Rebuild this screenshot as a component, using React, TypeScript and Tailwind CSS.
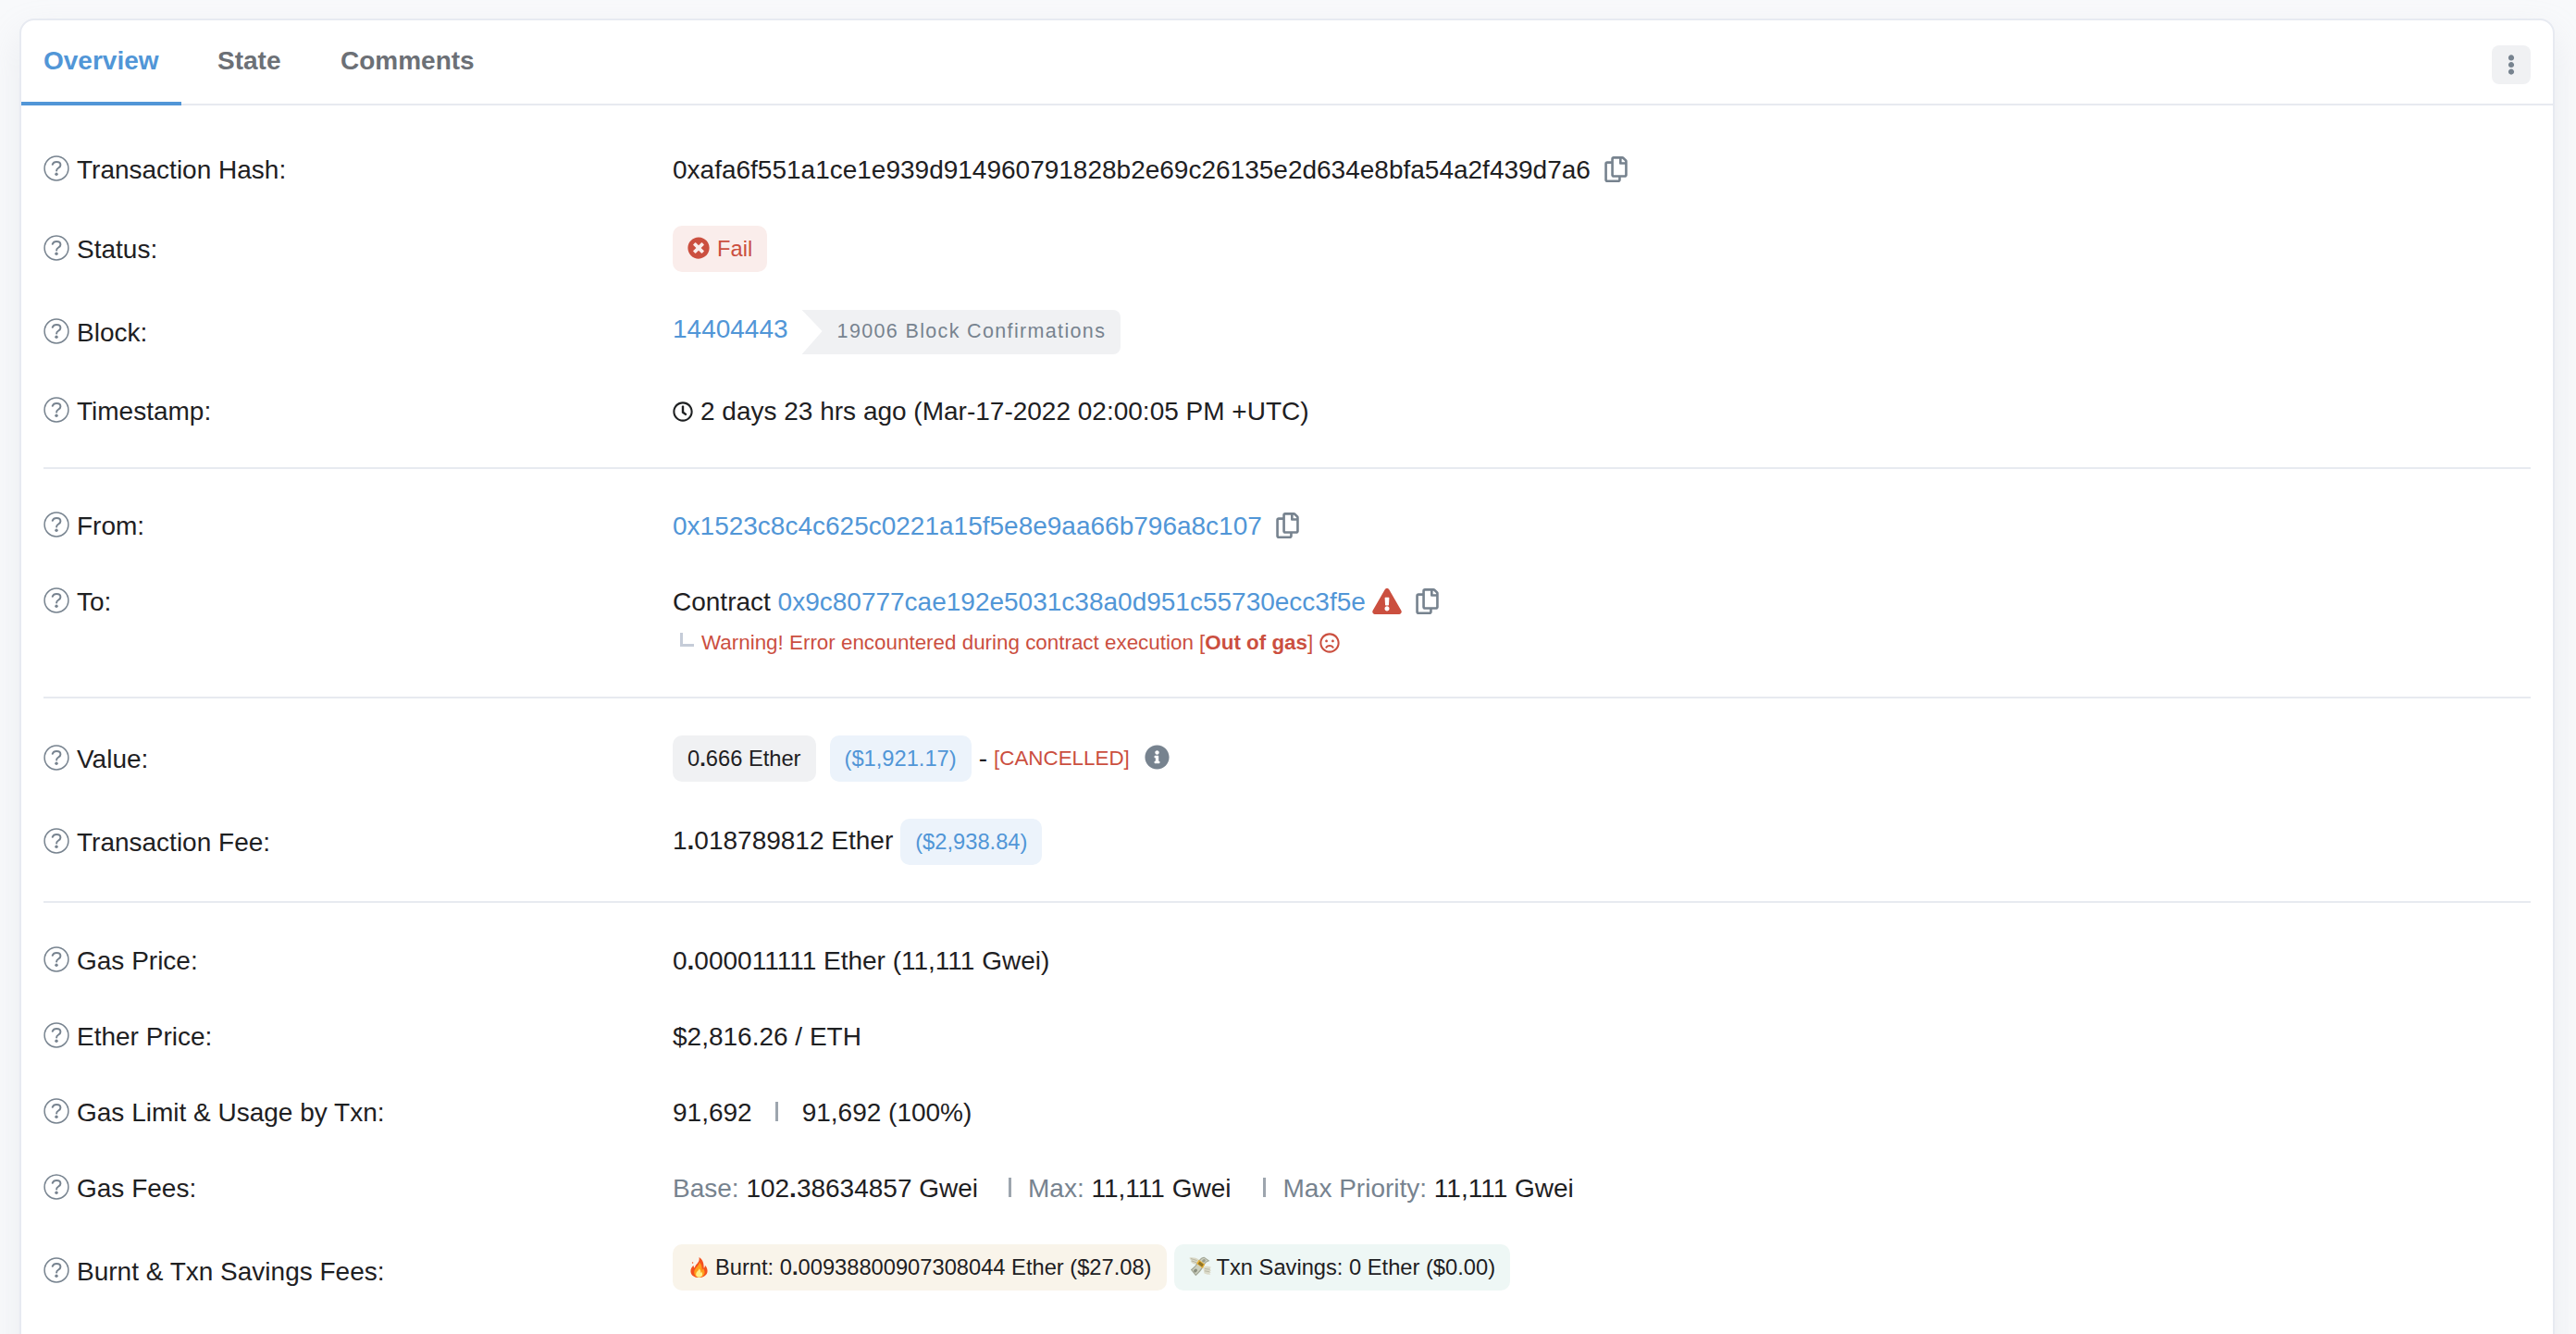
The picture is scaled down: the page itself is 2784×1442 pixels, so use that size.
import type { ReactNode } from "react";
import {
  FaEllipsisV,
  FaExclamationTriangle,
  FaInfoCircle,
  FaRegClock,
  FaRegCopy,
  FaRegFrown,
  FaTimesCircle,
} from "react-icons/fa";

function HelpIcon() {
  return (
    <svg viewBox="0 0 28 28" className="-mt-0.5 size-7 shrink-0 text-[#77838f]" fill="none" stroke="currentColor">
      <circle cx="14" cy="14" r="12.9" strokeWidth="1.5" />
      <path d="M9.700 9.800C10.400 8 12 7 14.100 7c2.600 0 4.300 1.400 4.300 3.400 0 3.100-4.300 3-4.300 6" strokeWidth="2" strokeLinecap="round" />
      <circle cx="14" cy="20.300" r="1.700" fill="currentColor" stroke="none" />
    </svg>
  );
}

function Flame() {
  return (
    <svg viewBox="0 0 20 24" className="ml-[3px] h-6 w-[19px] shrink-0">
      <path d="M10 .5c.6 3-.3 5-2 7C6 9.600 5.200 10.800 5.200 12.600 4.200 12 3.700 11 3.700 9.600 1.400 11.600.3 14 .5 17 .8 21 4.500 23.700 10 23.700s9.300-3 9.500-7.200c.2-3-1-5.200-2.700-7 0 1.500-.4 2.500-1.300 3.200C15.500 8 14.500 3 10 .5z" fill="#f4511e" />
      <path d="M10.300 6c.3 3.500-4.600 6.300-5.700 10.200C3.800 20 6 23.300 10 23.300s6.800-2.800 6.300-6.600c-.2-1.500-.8-2.700-1.700-3.700-.2 1-.6 1.600-1.300 2C13.500 11.500 12.600 8.200 10.300 6z" fill="#ff9d1c" />
      <path d="M10 13.200c.2 2-3.200 3.300-3.500 6.300-.2 2.200 1.300 3.700 3.700 3.700s3.900-1.700 3.600-4c-.1-.9-.5-1.700-1-2.200-.2.600-.5 1-.9 1.200.1-2-.5-3.900-1.900-5z" fill="#fff08a" />
      <circle cx="2.700" cy="6.700" r=".8" fill="#f4511e" />
    </svg>
  );
}

function FlyingMoney() {
  return (
    <svg viewBox="0 0 24 22" className="-mt-0.5 h-[22px] w-6 shrink-0">
      <path d="M.5 1.500C4 1 8 1.500 10.500 3.500L8.500 9C5 8.500 2 6.500 1.700 5.200L3 5C1.500 4 .7 2.800.5 1.500z" fill="#d9d8c6" />
      <path d="M2 2.500l6.500 2M2.800 4.900l5.400 1.900" stroke="#aaa996" strokeWidth=".7" />
      <path d="M23.700 11.500c-2.700-1.300-6-1-8.500.5l1.300 6.500c3 1.500 6 1.700 7 .9l-1.400-1 1.600-.9-1.300-1.300 1.700-.7-1.400-1.500z" fill="#dcdbc9" />
      <path d="M17 13.500l5.500.7M17 15.800l5.300 1" stroke="#aaa996" strokeWidth=".7" />
      <path d="M1.800 14.500C5 12 8 9 10 5.500 12 2 14.500.8 16.500.7l6 4.300c-3 .5-5 2.500-6.500 5.500-2 4-5 7.500-8.700 10.800z" fill="#a3a796" />
      <path d="M3.500 14.700C6.500 12.300 9 9 11 6c1.600-2.600 3.600-4 5.300-4.200l4 2.900c-2.300.9-4 2.700-5.400 5.400-1.900 3.600-4.300 6.700-7.500 9.300z" fill="#cdd0bf" />
      <ellipse cx="7" cy="15.500" rx="2.200" ry="1.700" transform="rotate(-45 7 15.500)" fill="#8b8f7f" />
      <ellipse cx="16" cy="4.800" rx="2" ry="1.500" transform="rotate(-35 16 4.800)" fill="#9a9e8e" />
      <path d="M8 7.800l6.800 5.200 2.500-4.200-6.600-5z" fill="#e9b43c" />
      <path d="M9.700 8.200l4.500 3.300 1.700-2.800-4.400-3.300z" fill="#8f7427" />
    </svg>
  );
}

function CopyButton() {
  return (
    <button className="-mt-px ml-[15px] shrink-0 text-[#77838f]" aria-label="Copy">
      <FaRegCopy className="h-7 w-[25px]" />
    </button>
  );
}

function Row({ label, height, children }: { label: string; height: string; children: ReactNode }) {
  return (
    <div className={`grid grid-cols-[680px_1fr] ${height}`}>
      <div className="flex items-center gap-2">
        <HelpIcon />
        <span className="pt-0.5">{label}</span>
      </div>
      <div className="flex items-center">{children}</div>
    </div>
  );
}

function Badge({ className, children }: { className: string; children: ReactNode }) {
  return (
    <span className={`flex h-[50px] shrink-0 items-center rounded-[10px] px-4 text-[23.7px] ${className}`}>
      {children}
    </span>
  );
}

const Divider = () => <hr className="border-t-2 border-[#e7eaf0]" />;
const Bar = ({ className }: { className: string }) => (
  <span className={`-mt-px h-[21px] w-[3px] bg-[#9da5ae] ${className}`} />
);

export default function App() {
  return (
    <div className="h-[1442px] w-[2784px] overflow-hidden bg-[#f8f9fb] pt-5 pl-[21px] font-['Liberation_Sans',Arial,sans-serif] text-[28px] leading-[42px] whitespace-nowrap text-[#1e2022]">
      <main className="h-[1600px] w-[2740px] rounded-[16px] border-2 border-[#e7eaf1] bg-white shadow-[0_16px_38px_rgba(180,186,197,0.2)]">
        <header className="flex h-[92px] justify-between border-b-2 border-[#e7eaf0]">
          <nav className="flex h-[92px] font-bold text-[#6c7076]">
            <a className="w-[173px] border-b-4 border-[#5196d7] pt-[23px] pl-[24px] text-[#5196d7]">Overview</a>
            <a className="w-[132px] pt-[23px] pl-[39px]">State</a>
            <a className="pt-[23px] pl-[40px]">Comments</a>
          </nav>
          <button className="mt-[27px] mr-6 flex size-[42px] items-center justify-center rounded-lg bg-[#f0f1f3] text-[#77838f]" aria-label="More">
            <FaEllipsisV className="size-[22px]" />
          </button>
        </header>

        <div className="px-6">
          <section className="pt-[26px] pb-[23px]">
            <Row label="Transaction Hash:" height="h-[86px]">
              <span className="pt-0.5">0xafa6f551a1ce1e939d914960791828b2e69c26135e2d634e8bfa54a2f439d7a6</span>
              <CopyButton />
            </Row>
            <Row label="Status:" height="h-[86px]">
              <Badge className="gap-2 bg-[#faedeb] text-[#cb4f3f]">
                <FaTimesCircle className="-mt-0.5 size-6" />
                <span>Fail</span>
              </Badge>
            </Row>
            <Row label="Block:" height="h-[94px]">
              <a className="-mt-[6px] text-[#5196d7]">14404443</a>
              <span className="ml-[15px] flex h-12 items-center rounded-r-lg bg-[#f0f1f3] pr-[16px] pb-0.5 pl-[38px] text-[21.5px] tracking-[1.35px] text-[#77838f] [clip-path:polygon(0_0,100%_0,100%_100%,0_100%,22px_48%)]">
                19006 Block Confirmations
              </span>
            </Row>
            <Row label="Timestamp:" height="h-[76px]">
              <FaRegClock className="mt-0.5 size-[22px]" />
              <span className="ml-2 pt-0.5">2 days 23 hrs ago (Mar-17-2022 02:00:05 PM +UTC)</span>
            </Row>
          </section>
          <Divider />

          <section className="h-[246px] pt-5">
            <Row label="From:" height="h-[82px]">
              <a className="pt-0.5 text-[#5196d7]">0x1523c8c4c625c0221a15f5e8e9aa66b796a8c107</a>
              <CopyButton />
            </Row>
            <Row label="To:" height="h-[82px]">
              <span className="pt-0.5">Contract&nbsp;</span>
              <a className="pt-0.5 text-[#5196d7]">0x9c80777cae192e5031c38a0d951c55730ecc3f5e</a>
              <FaExclamationTriangle className="ml-[7px] h-7 w-8 text-[#cb4f3f]" />
              <CopyButton />
            </Row>
            <div className="-mt-[18px] ml-[688px] flex items-center text-[22.4px] text-[#cb4f3f]">
              <span className="-mt-[7px] mr-2 h-[15px] w-[15px] border-b-[3px] border-l-[3px] border-[#c5ccd8]" />
              <span className="pt-px">
                Warning! Error encountered during contract execution [<b>Out of gas</b>]
              </span>
              <FaRegFrown className="ml-[7px] size-[22px]" />
            </div>
          </section>
          <Divider />

          <section className="pt-5 pb-[19px]">
            <Row label="Value:" height="h-[90px]">
              <Badge className="bg-[#f0f1f3]">0<b>.</b>666 Ether</Badge>
              <Badge className="ml-[15px] bg-[#ecf3fb] text-[#5196d7]">($1,921.17)</Badge>
              <span className="ml-2">-</span>
              <span className="ml-[7px] text-[22.4px] text-[#cb4f3f]">[CANCELLED]</span>
              <FaInfoCircle className="-mt-1 ml-4 size-[27px] text-[#77838f]" />
            </Row>
            <Row label="Transaction Fee:" height="h-[90px]">
              <span className="-mt-[3px]">1<b>.</b>018789812 Ether</span>
              <Badge className="ml-2 bg-[#ecf3fb] text-[#5196d7]">($2,938.84)</Badge>
            </Row>
          </section>
          <Divider />

          <section className="pt-[21px]">
            <Row label="Gas Price:" height="h-[82px]">
              <span className="pt-0.5">0<b>.</b>000011111 Ether (11,111 Gwei)</span>
            </Row>
            <Row label="Ether Price:" height="h-[82px]">
              <span className="pt-0.5">$2,816.26 / ETH</span>
            </Row>
            <Row label="Gas Limit & Usage by Txn:" height="h-[82px]">
              <span className="pt-0.5">91,692</span>
              <Bar className="ml-[25px]" />
              <span className="ml-[26px] pt-0.5">91,692 (100%)</span>
            </Row>
            <Row label="Gas Fees:" height="h-[82px]">
              <span className="pt-0.5"><span className="text-[#77838f]">Base:</span> 102<b>.</b>38634857 Gwei</span>
              <Bar className="ml-[33px]" />
              <span className="ml-[18px] pt-0.5"><span className="text-[#77838f]">Max:</span> 11,111 Gwei</span>
              <Bar className="ml-[34px]" />
              <span className="ml-[19px] pt-0.5"><span className="text-[#77838f]">Max Priority:</span> 11,111 Gwei</span>
            </Row>
            <Row label="Burnt & Txn Savings Fees:" height="h-[98px]">
              <Badge className="-mt-2 bg-[#f9f4ea]">
                <Flame />
                <span className="ml-2">Burnt: 0<b>.</b>00938800907308044 Ether ($27.08)</span>
              </Badge>
              <Badge className="-mt-2 ml-2 bg-[#eef7f5]">
                <FlyingMoney />
                <span className="ml-[6px]">Txn Savings: 0 Ether ($0.00)</span>
              </Badge>
            </Row>
          </section>
        </div>
      </main>
    </div>
  );
}
